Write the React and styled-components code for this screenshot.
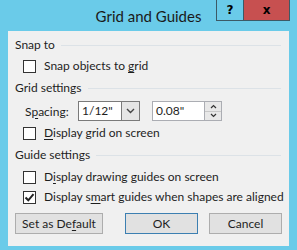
import React from "react";
import styled, { createGlobalStyle } from "styled-components";

const GlobalStyle = createGlobalStyle`
  html, body {
    margin: 0;
    padding: 0;
    background: #6acbe9;
  }
  body {
    font-family: "Lato", "Open Sans", sans-serif;
  }
`;

export default function App() {
  return (
    <>
      <GlobalStyle />
      <Window>
        <TitleBar>
          <span />
          <Title>Grid and Guides</Title>
          <Controls>
            <CaptionButton>?</CaptionButton>
            <CaptionButton close>x</CaptionButton>
          </Controls>
        </TitleBar>
        <Panel>
          <Section>
            <span>Snap to</span>
          </Section>
          <CheckRow>
            <Box />
            <span>
              Snap objects to <u>g</u>rid
            </span>
          </CheckRow>

          <Section gap={6}>
            <span>Grid settings</span>
          </Section>
          <SpacingRow>
            <Label>
              S<u>p</u>acing:
            </Label>
            <Combo>
              <Field>1/12"</Field>
              <DropButton>
                <svg width="9" height="6" viewBox="0 0 9 6">
                  <path d="M1 1 L4.5 4.5 L8 1" fill="none" stroke="#444" strokeWidth="1.4" />
                </svg>
              </DropButton>
            </Combo>
            <Spinner>
              <Field wide>0.08"</Field>
              <SpinButtons>
                <SpinArrow>
                  <svg width="7" height="5" viewBox="0 0 7 5">
                    <path d="M1 4 L3.5 1.5 L6 4" fill="none" stroke="#333" strokeWidth="1.2" />
                  </svg>
                </SpinArrow>
                <SpinArrow>
                  <svg width="7" height="5" viewBox="0 0 7 5">
                    <path d="M1 1 L3.5 3.5 L6 1" fill="none" stroke="#333" strokeWidth="1.2" />
                  </svg>
                </SpinArrow>
              </SpinButtons>
            </Spinner>
          </SpacingRow>
          <CheckRow gap={4}>
            <Box />
            <span>
              <u>D</u>isplay grid on screen
            </span>
          </CheckRow>

          <Section gap={6}>
            <span>Guide settings</span>
          </Section>
          <CheckRow gap={6}>
            <Box />
            <span>
              D<u>i</u>splay drawing guides on screen
            </span>
          </CheckRow>
          <CheckRow gap={4}>
            <Box>
              <svg width="11" height="11" viewBox="0 0 11 11">
                <path d="M1.5 5.5 L4.3 8.3 L9.5 2.2" fill="none" stroke="#222" strokeWidth="2" />
              </svg>
            </Box>
            <span>
              Display s<u>m</u>art guides when shapes are aligned
            </span>
          </CheckRow>

          <ButtonRow>
            <Button width={88}>
              Set as De<u>f</u>ault
            </Button>
            <Button width={73} primary>
              OK
            </Button>
            <Button width={73}>Cancel</Button>
          </ButtonRow>
        </Panel>
      </Window>
    </>
  );
}

const Window = styled.div`
  width: 297px;
  height: 250px;
  background: #6acbe9;
  display: flex;
  flex-direction: column;
  box-sizing: border-box;
  padding: 0 8px 4px 8px;
  color: #000;
  overflow: hidden;
`;

const TitleBar = styled.div`
  height: 31px;
  display: grid;
  grid-template-columns: 1fr auto 1fr;
  margin: 0 -8px;
`;

const Title = styled.div`
  font-size: 15px;
  line-height: 31px;
  color: #1a1a1a;
  padding-top: 1px;
`;

const Controls = styled.div`
  display: flex;
  justify-self: end;
  align-self: start;
  margin-right: 7px;
`;

const CaptionButton = styled.div`
  width: ${(p) => (p.close ? 46 : 28)}px;
  height: 21px;
  box-sizing: border-box;
  border: 1px solid #3c5a66;
  border-top: none;
  ${(p) => (p.close ? "border-left: none;" : "")}
  background: ${(p) => (p.close ? "#c75050" : "#6acbe9")};
  display: flex;
  align-items: center;
  justify-content: center;
  font-family: "DejaVu Sans", sans-serif;
  font-weight: bold;
  font-size: 12px;
  color: #000;
`;

const Panel = styled.div`
  flex: 1;
  width: 281px;
  box-sizing: border-box;
  min-width: 0;
  background: #f0f0f0;
  padding: 6px 7px 0 7px;
  display: flex;
  flex-direction: column;
  font-size: 12px;
  color: #1e1e1e;

  u {
    text-decoration: underline;
    text-underline-offset: 2px;
  }
`;

const Section = styled.div`
  height: 16px;
  margin-top: ${(p) => p.gap || 0}px;
  display: flex;
  align-items: center;
  line-height: 16px;
  white-space: nowrap;

  &::after {
    content: "";
    flex: 1;
    height: 1px;
    background: #dce2e7;
    margin-left: 6px;
    margin-right: 1px;
  }
`;

const CheckRow = styled.div`
  height: 16px;
  margin-top: ${(p) => p.gap ?? 5}px;
  padding-left: 8px;
  display: flex;
  align-items: center;
  gap: 8px;
  white-space: nowrap;
  line-height: 16px;
`;

const Box = styled.div`
  width: 13px;
  height: 13px;
  box-sizing: border-box;
  border: 1px solid #333;
  background: #fff;
  display: flex;
  align-items: center;
  justify-content: center;
`;

const SpacingRow = styled.div`
  height: 20px;
  margin-top: 5px;
  padding-left: 10px;
  display: flex;
  align-items: center;
`;

const Label = styled.span`
  width: 53px;
`;

const Combo = styled.div`
  display: flex;
  width: 62px;
  height: 20px;
  box-sizing: border-box;
  border: 1px solid #7a7a7a;
  background: #fff;
`;

const Field = styled.div`
  flex: 1;
  padding-left: 3px;
  line-height: 18px;
  ${(p) => (p.wide ? "width: 52px; flex: none; border: 1px solid #abadb3; border-right: none; box-sizing: border-box; height: 20px; background: #fff;" : "")}
`;

const DropButton = styled.div`
  width: 17px;
  border-left: 1px solid #7a7a7a;
  background: #e5e5e5;
  display: flex;
  align-items: center;
  justify-content: center;
`;

const Spinner = styled.div`
  display: flex;
  margin-left: 12px;
  height: 20px;
`;

const SpinButtons = styled.div`
  width: 18px;
  display: flex;
  flex-direction: column;
  border: 1px solid #abadb3;
  box-sizing: border-box;
  background: #f0f0f0;
`;

const SpinArrow = styled.div`
  flex: 1;
  display: flex;
  align-items: center;
  justify-content: center;
  background: #e8e8e8;

  & + & {
    border-top: 1px solid #c8c8c8;
  }
`;

const ButtonRow = styled.div`
  margin-top: 8px;
  display: flex;
`;

const Button = styled.div`
  width: ${(p) => p.width}px;
  height: 21px;
  box-sizing: border-box;
  border: 1px solid ${(p) => (p.primary ? "#3c7fb1" : "#adadad")};
  background: #e1e1e1;
  display: flex;
  align-items: center;
  justify-content: center;
  color: #1e1e1e;

  &:first-child {
    margin-right: 22px;
  }
  & + & + & {
    margin-left: 11px;
  }
`;
